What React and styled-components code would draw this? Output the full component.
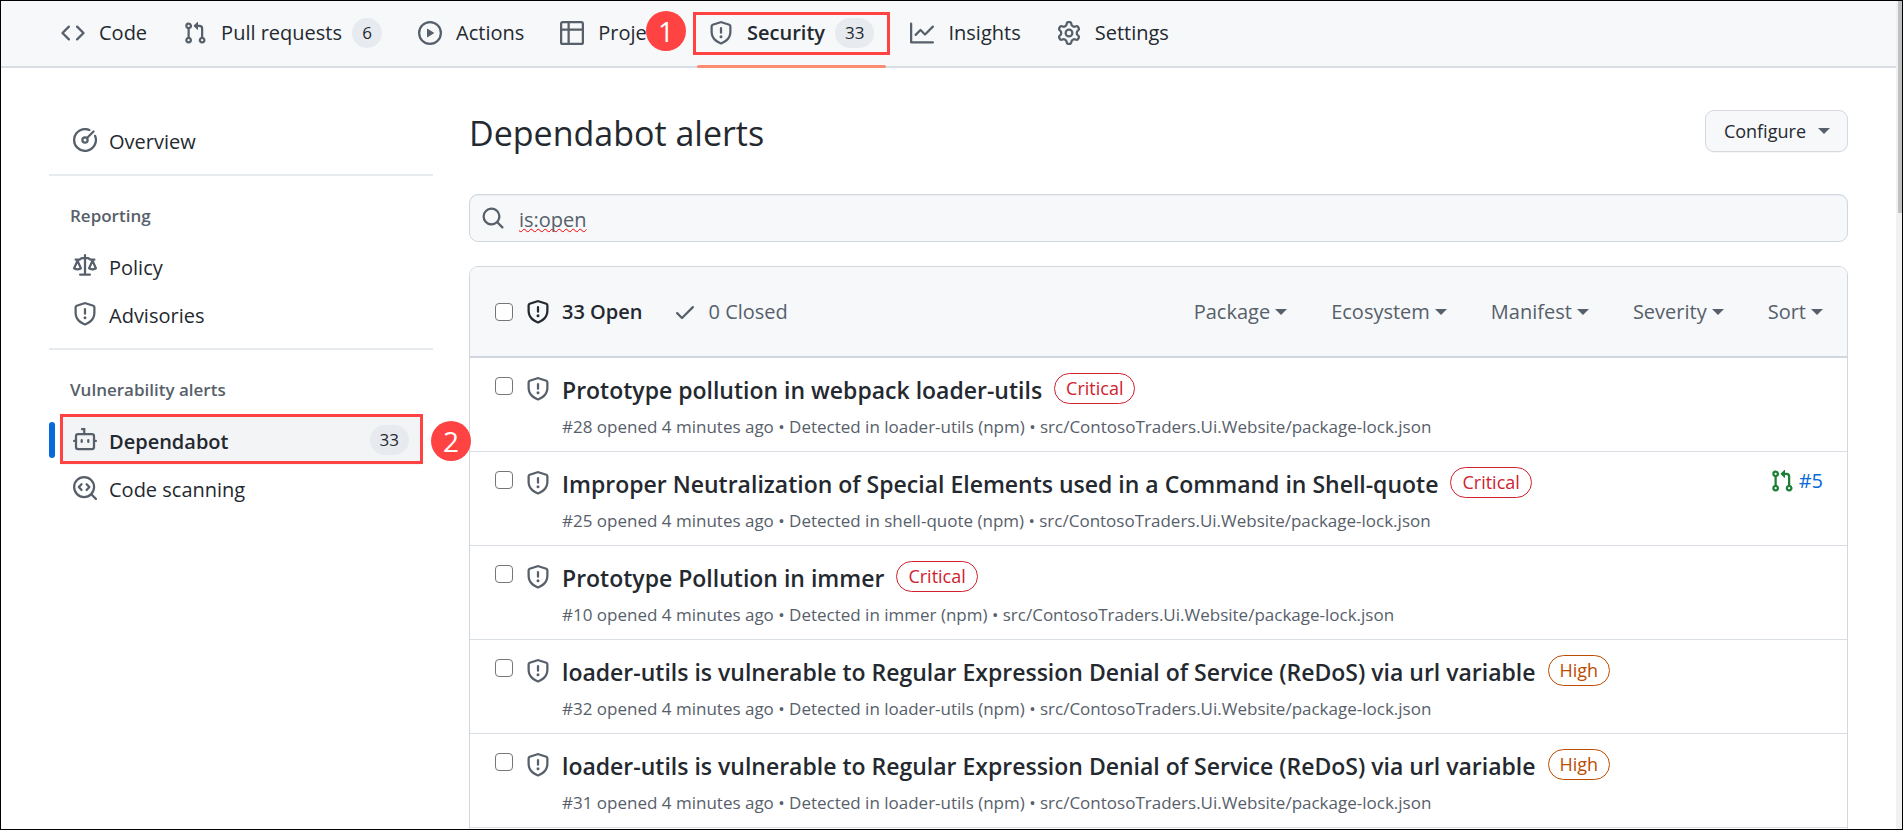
import React from "react";
import styled, { createGlobalStyle, css } from "styled-components";

const color = {
  ink: "#24292f",
  muted: "#57606a",
  line: "#d0d7de",
  rowLine: "#d8dee4",
  canvas: "#f6f8fa",
  link: "#0969da",
  mark: "#ff4343",
};

const GlobalStyle = createGlobalStyle`
  *, *::before, *::after { box-sizing: border-box; }
  body {
    margin: 0;
    background: #fff;
    color: ${color.ink};
    font-family: "Open Sans", "Segoe UI", "Noto Sans", sans-serif;
    font-size: 20px;
    line-height: 30px;
  }
  button, input { font: inherit; color: inherit; }
  a { color: inherit; text-decoration: none; }
  h1, h2, h3, p, ul { margin: 0; padding: 0; }
  ul { list-style: none; }
`;

const paths = {
  code: "m11.28 3.22 4.25 4.25a.75.75 0 0 1 0 1.06l-4.25 4.25a.749.749 0 0 1-1.275-.326.749.749 0 0 1 .215-.734L13.94 8l-3.72-3.72a.749.749 0 0 1 .326-1.275.749.749 0 0 1 .734.215Zm-6.56 0a.751.751 0 0 1 1.042.018.751.751 0 0 1 .018 1.042L2.06 8l3.72 3.72a.749.749 0 0 1-.326 1.275.749.749 0 0 1-.734-.215L.47 8.53a.75.75 0 0 1 0-1.06Z",
  pull: "M1.5 3.25a2.25 2.25 0 1 1 3 2.122v5.256a2.251 2.251 0 1 1-1.5 0V5.372A2.25 2.25 0 0 1 1.5 3.25Zm5.677-.177L9.573.677A.25.25 0 0 1 10 .854V2.5h1A2.5 2.5 0 0 1 13.5 5v5.628a2.251 2.251 0 1 1-1.5 0V5a1 1 0 0 0-1-1h-1v1.646a.25.25 0 0 1-.427.177L7.177 3.427a.25.25 0 0 1 0-.354ZM3.75 2.5a.75.75 0 1 0 0 1.5.75.75 0 0 0 0-1.5Zm0 9.5a.75.75 0 1 0 0 1.5.75.75 0 0 0 0-1.5Zm8.25.75a.75.75 0 1 0 1.5 0 .75.75 0 0 0-1.5 0Z",
  play: "M8 0a8 8 0 1 1 0 16A8 8 0 0 1 8 0ZM1.5 8a6.5 6.5 0 1 0 13 0 6.5 6.5 0 0 0-13 0Zm4.879-2.773 4.264 2.559a.25.25 0 0 1 0 .428l-4.264 2.559A.25.25 0 0 1 6 10.559V5.442a.25.25 0 0 1 .379-.215Z",
  table: "M0 1.75C0 .784.784 0 1.75 0h12.5C15.216 0 16 .784 16 1.75v12.5A1.75 1.75 0 0 1 14.25 16H1.75A1.75 1.75 0 0 1 0 14.25ZM6.5 6.5v8h7.75a.25.25 0 0 0 .25-.25V6.5Zm8-1.5V1.75a.25.25 0 0 0-.25-.25H6.5V5Zm-13 1.5v7.75c0 .138.112.25.25.25H5v-8ZM5 5V1.5H1.75a.25.25 0 0 0-.25.25V5Z",
  graph: "M1.5 1.75V13.5h13.75a.75.75 0 0 1 0 1.5H.75a.75.75 0 0 1-.75-.75V1.75a.75.75 0 0 1 1.5 0Zm14.28 2.53-5.25 5.25a.75.75 0 0 1-1.06 0L7 7.06 4.28 9.78a.751.751 0 0 1-1.042-.018.751.751 0 0 1-.018-1.042l3.25-3.25a.75.75 0 0 1 1.06 0L10 7.94l4.72-4.72a.751.751 0 0 1 1.042.018.751.751 0 0 1 .018 1.042Z",
  gear: "M8 0a8.2 8.2 0 0 1 .701.031C9.444.095 9.99.645 10.16 1.29l.288 1.107c.018.066.079.158.212.224.231.114.454.243.668.386.123.082.233.09.299.071l1.103-.303c.644-.176 1.392.021 1.82.63.27.385.506.792.704 1.218.315.675.111 1.422-.364 1.891l-.814.806c-.049.048-.098.147-.088.294.016.257.016.515 0 .772-.01.147.038.246.088.294l.814.806c.475.469.679 1.216.364 1.891a7.977 7.977 0 0 1-.704 1.217c-.428.61-1.176.807-1.82.63l-1.102-.302c-.067-.019-.177-.011-.3.071a5.909 5.909 0 0 1-.668.386c-.133.066-.194.158-.211.224l-.29 1.106c-.168.646-.715 1.196-1.458 1.26a8.006 8.006 0 0 1-1.402 0c-.743-.064-1.289-.614-1.458-1.26l-.289-1.106c-.018-.066-.079-.158-.212-.224a5.738 5.738 0 0 1-.668-.386c-.123-.082-.233-.09-.299-.071l-1.103.303c-.644.176-1.392-.021-1.82-.63a8.12 8.12 0 0 1-.704-1.218c-.315-.675-.111-1.422.363-1.891l.815-.806c.05-.048.098-.147.088-.294a6.214 6.214 0 0 1 0-.772c.01-.147-.038-.246-.088-.294l-.815-.806C.635 6.045.431 5.298.746 4.623a7.92 7.92 0 0 1 .704-1.217c.428-.61 1.176-.807 1.82-.63l1.102.302c.067.019.177.011.3-.071.214-.143.437-.272.668-.386.133-.066.194-.158.211-.224l.29-1.106C6.009.645 6.556.095 7.299.03 7.53.01 7.764 0 8 0Zm-.571 1.525c-.036.003-.108.036-.137.146l-.289 1.105c-.147.561-.549.967-.998 1.189-.173.086-.34.183-.5.29-.417.278-.97.423-1.529.27l-1.103-.303c-.109-.03-.175.016-.195.045-.22.312-.412.644-.573.99-.014.031-.021.11.059.19l.815.806c.411.406.562.957.53 1.456a4.709 4.709 0 0 0 0 .582c.032.499-.119 1.05-.53 1.456l-.815.806c-.081.08-.073.159-.059.19.162.346.353.677.573.989.02.03.085.076.195.046l1.102-.303c.56-.153 1.113-.008 1.53.27.161.107.328.204.501.29.447.222.85.629.997 1.189l.289 1.105c.029.109.101.143.137.146a6.6 6.6 0 0 0 1.142 0c.036-.003.108-.036.137-.146l.289-1.105c.147-.561.549-.967.998-1.189.173-.086.34-.183.5-.29.417-.278.97-.423 1.529-.27l1.103.303c.109.029.175-.016.195-.045.22-.313.411-.644.573-.99.014-.031.021-.11-.059-.19l-.815-.806c-.411-.406-.562-.957-.53-1.456a4.709 4.709 0 0 0 0-.582c-.032-.499.119-1.05.53-1.456l.815-.806c.081-.08.073-.159.059-.19a6.464 6.464 0 0 0-.573-.989c-.02-.03-.085-.076-.195-.046l-1.102.303c-.56.153-1.113.008-1.53-.27a4.44 4.44 0 0 0-.501-.29c-.447-.222-.85-.629-.997-1.189l-.289-1.105c-.029-.11-.101-.143-.137-.146a6.6 6.6 0 0 0-1.142 0ZM11 8a3 3 0 1 1-6 0 3 3 0 0 1 6 0ZM9.5 8a1.5 1.5 0 1 0-3.001.001A1.5 1.5 0 0 0 9.5 8Z",
  shield: "M7.467.133a1.748 1.748 0 0 1 1.066 0l5.25 1.68A1.75 1.75 0 0 1 15 3.48V7c0 1.566-.32 3.182-1.303 4.682-.983 1.498-2.585 2.813-5.032 3.855a1.697 1.697 0 0 1-1.33 0c-2.447-1.042-4.049-2.357-5.032-3.855C1.32 10.182 1 8.566 1 7V3.48a1.755 1.755 0 0 1 1.217-1.667Zm.61 1.429a.25.25 0 0 0-.153 0l-5.25 1.68a.25.25 0 0 0-.174.238V7c0 1.358.275 2.666 1.057 3.86.784 1.194 2.121 2.34 4.366 3.297a.196.196 0 0 0 .154 0c2.245-.956 3.582-2.104 4.366-3.298C13.225 9.666 13.5 8.36 13.5 7V3.48a.251.251 0 0 0-.174-.237l-5.25-1.68ZM8.75 4.75v3a.75.75 0 0 1-1.5 0v-3a.75.75 0 0 1 1.5 0ZM9 10.5a1 1 0 1 1-2 0 1 1 0 0 1 2 0Z",
  search: "M10.68 11.74a6 6 0 0 1-7.922-8.982 6 6 0 0 1 8.982 7.922l3.04 3.04a.749.749 0 0 1-.326 1.275.749.749 0 0 1-.734-.215ZM11.5 7a4.499 4.499 0 1 0-8.997 0A4.499 4.499 0 0 0 11.5 7Z",
  check: "M13.78 4.22a.75.75 0 0 1 0 1.06l-7.25 7.25a.75.75 0 0 1-1.06 0L2.22 9.28a.751.751 0 0 1 .018-1.042.751.751 0 0 1 1.042-.018L6 10.94l6.72-6.72a.75.75 0 0 1 1.06 0Z",
  law: "M8.75.75V2h.985c.304 0 .603.08.867.231l1.29.736c.038.022.08.033.124.033h2.234a.75.75 0 0 1 0 1.5h-.427l2.111 4.692a.75.75 0 0 1-.154.838l-.53-.53.529.531-.001.002-.002.002-.006.006-.006.005-.01.01-.045.04c-.21.176-.441.327-.686.45C14.556 10.78 13.88 11 13 11a4.498 4.498 0 0 1-2.023-.454 3.544 3.544 0 0 1-.686-.45l-.045-.04-.016-.015-.006-.006-.004-.004v-.001a.75.75 0 0 1-.154-.838L12.178 4.5h-.162c-.305 0-.604-.079-.868-.231l-1.29-.736a.245.245 0 0 0-.124-.033H8.75V13h2.5a.75.75 0 0 1 0 1.5h-6.5a.75.75 0 0 1 0-1.5h2.5V3.5h-.984a.245.245 0 0 0-.124.033l-1.289.737c-.265.15-.564.23-.869.23h-.162l2.112 4.692a.75.75 0 0 1-.154.838l-.53-.53.529.531-.001.002-.002.002-.006.006-.016.015-.045.04c-.21.176-.441.327-.686.45C4.556 10.78 3.88 11 3 11a4.498 4.498 0 0 1-2.023-.454 3.544 3.544 0 0 1-.686-.45l-.045-.04-.016-.015-.006-.006-.004-.004v-.001a.75.75 0 0 1-.154-.838L2.178 4.5H1.75a.75.75 0 0 1 0-1.5h2.234a.249.249 0 0 0 .125-.033l1.288-.737c.265-.15.564-.23.869-.23h.984V.75a.75.75 0 0 1 1.5 0Zm2.945 8.477c.285.135.718.273 1.305.273s1.02-.138 1.305-.273L13 6.327Zm-10 0c.285.135.718.273 1.305.273s1.02-.138 1.305-.273L3 6.327Z",
};

const outlines = {
  meter: (
    <>
      <path d="M10.9 1.35A7.25 7.25 0 1 0 14.7 5.2" />
      <circle cx="8" cy="8" r="1.75" />
      <path d="M9.3 6.7 13.7 2.3" />
    </>
  ),
  dependabot: (
    <>
      <path d="M6 .75h1.5V4" />
      <rect x="2" y="4" width="12" height="10" rx="1.4" />
      <path d="M2 8.6H.75M14 8.6h1.25M5.8 8.1v1.2M10.2 8.1v1.2" />
    </>
  ),
  codescan: (
    <>
      <circle cx="7.4" cy="7.4" r="6.65" />
      <path d="M12.2 12.2 15.25 15.25" />
      <path d="M5.7 5.5 3.9 7.4l1.8 1.9M9.1 5.5l1.8 1.9-1.8 1.9" strokeLinejoin="round" />
    </>
  ),
};

const Svg = styled.svg`
  width: 24px;
  height: 24px;
  flex: none;
  color: ${(p) => p.$tone || color.muted};
`;

function Icon({ name, tone }) {
  return (
    <Svg viewBox="0 0 16 16" aria-hidden="true" $tone={tone}>
      {paths[name] ? (
        <path d={paths[name]} fill="currentColor" fillRule="evenodd" />
      ) : (
        <g fill="none" stroke="currentColor" strokeWidth="1.5" strokeLinecap="round">
          {outlines[name]}
        </g>
      )}
    </Svg>
  );
}

const Shell = styled.div`
  display: grid;
  grid-template-columns: minmax(0, 1fr) 6px;
  height: 100vh;
  overflow: hidden;
  border: 1px solid #000;
`;

const Page = styled.div`
  min-width: 0;
`;

const ScrollTrack = styled.div`
  padding-left: 2px;
  background: #f1f1f1;
`;

const ScrollThumb = styled.div`
  height: 212px;
  background: #c1c1c1;
`;

const TopNav = styled.nav`
  display: flex;
  gap: 12px;
  height: 67px;
  padding: 0 48px;
  background: ${color.canvas};
  border-bottom: 2px solid ${color.rowLine};
`;

const Tab = styled.a`
  position: relative;
  display: flex;
  align-items: center;
  gap: 10px;
  padding: 0 12px 2px;
  white-space: nowrap;
  font-weight: ${(p) => (p.$active ? 600 : 400)};
  ${(p) =>
    p.$active &&
    css`
      &::after {
        content: "";
        position: absolute;
        left: 0;
        right: 0;
        bottom: -2px;
        height: 3px;
        border-radius: 2px;
        background: #fd8c73;
      }
    `}
`;

const TabLabel = styled.span`
  padding-left: 4px;
`;

const Counter = styled.span`
  min-width: 30px;
  padding: 0 10px;
  border-radius: 15px;
  background: #e7eaef;
  font-size: 17px;
  font-weight: 500;
  line-height: 30px;
  text-align: center;
`;

const TabFrame = styled.span`
  position: absolute;
  inset: 11px -4px 11px;
  border: 3px solid ${color.mark};
`;

const Marker = styled.span`
  position: absolute;
  display: grid;
  place-items: center;
  width: 40px;
  height: 40px;
  border-radius: 50%;
  background: ${color.mark};
  color: #fff;
  font-size: 28px;
  font-weight: 400;
  z-index: 1;
`;

const TabMarker = styled(Marker)`
  top: 10px;
  left: -51px;
`;

const Body = styled.div`
  display: grid;
  grid-template-columns: 384px minmax(0, 1fr);
  gap: 36px;
  padding: 42px 48px 0;
`;

const Side = styled.nav`
  padding-top: 7px;
`;

const SideGroup = styled.section`
  & + & {
    margin-top: 9px;
    padding-top: 24px;
    border-top: 2px solid #e8ebee;
  }
`;

const SideTitle = styled.h2`
  padding: 0 21px;
  margin-bottom: 11px;
  color: ${color.muted};
  font-size: 17px;
  font-weight: 600;
  line-height: 32px;
`;

const SideItem = styled.a`
  position: relative;
  display: flex;
  align-items: center;
  gap: 12px;
  height: 48px;
  margin: 0 12px;
  padding: 0 12px 2px;
  font-weight: ${(p) => (p.$active ? 600 : 400)};
  background: ${(p) => (p.$active ? "#f3f4f6" : "transparent")};
  ${(p) =>
    p.$active &&
    css`
      &::before {
        content: "";
        position: absolute;
        top: 5px;
        left: -12px;
        width: 6px;
        height: 36px;
        border-radius: 6px;
        background: ${color.link};
      }
    `}
`;

const SideLabel = styled.span`
  flex: 1;
  padding-top: 3px;
`;

const SideFrame = styled.span`
  position: absolute;
  inset: -3px -2px 1px -1px;
  border: 3px solid ${color.mark};
`;

const SideMarker = styled(Marker)`
  top: 4px;
  right: -50px;
`;

const Heading = styled.header`
  display: flex;
  align-items: center;
  justify-content: space-between;
  height: 42px;
  margin-bottom: 42px;
`;

const Title = styled.h1`
  padding-top: 4px;
  font-size: 34px;
  font-weight: 400;
  line-height: 48px;
`;

const Configure = styled.button`
  display: flex;
  align-items: center;
  gap: 12px;
  height: 42px;
  padding: 0 17px 0 18px;
  border: 1px solid #d5d9dd;
  border-radius: 9px;
  background: ${color.canvas};
  box-shadow: 0 1px 0 rgba(31, 35, 40, 0.04);
  font-size: 18px;
  font-weight: 500;
`;

const Caret = styled.span`
  border: 6px solid transparent;
  border-top-color: ${color.muted};
  border-bottom: 0;
`;

const SearchBox = styled.label`
  display: flex;
  align-items: center;
  gap: 14px;
  height: 48px;
  margin-bottom: 24px;
  padding: 0 11px;
  border: 1px solid ${color.line};
  border-radius: 9px;
  background: ${color.canvas};
  box-shadow: inset 0 1px 0 rgba(208, 215, 222, 0.3);
`;

const SearchInput = styled.input`
  flex: 1;
  min-width: 0;
  padding: 3px 0 0;
  border: 0;
  outline: 0;
  background: transparent;
  color: ${color.muted};
  text-decoration: underline wavy #f00 1px;
  text-decoration-skip-ink: none;
`;

const Panel = styled.section`
  padding-bottom: 24px;
  border: 1px solid ${color.line};
  border-radius: 9px;
`;

const PanelHead = styled.header`
  display: flex;
  align-items: center;
  height: 91px;
  padding: 1px 24px 0;
  border-bottom: 2px solid ${color.line};
  border-radius: 8px 8px 0 0;
  background: ${color.canvas};
`;

const Check = styled.input`
  appearance: none;
  flex: none;
  width: 18px;
  height: 18px;
  margin: 0 13px 0 1px;
  border: 1px solid #767676;
  border-radius: 4px;
  background: #fff;
`;

const StateLink = styled.a`
  display: flex;
  align-items: center;
  gap: 12px;
  margin-right: 30px;
  color: ${(p) => (p.$active ? color.ink : color.muted)};
  font-weight: ${(p) => (p.$active ? 600 : 400)};
`;

const Filters = styled.div`
  display: flex;
  gap: 44px;
  margin-left: auto;
`;

const Filter = styled.button`
  display: flex;
  align-items: center;
  gap: 5px;
  padding: 0;
  border: 0;
  background: transparent;
  color: ${color.muted};
`;

const Alert = styled.li`
  display: flex;
  align-items: flex-start;
  height: 94px;
  padding: 15px 24px 0;
  border-bottom: 1px solid ${color.rowLine};
`;

const Lead = styled.div`
  display: flex;
  align-items: flex-start;
  padding-top: 4px;
`;

const AlertBody = styled.div`
  flex: 1;
  min-width: 0;
  margin-left: 12px;
`;

const AlertLine = styled.div`
  display: flex;
  align-items: flex-start;
  gap: 12px;
`;

const AlertTitle = styled.h3`
  font-size: 23px;
  font-weight: 560;
  line-height: 35px;
  white-space: nowrap;
`;

const Severity = styled.span`
  height: 31px;
  padding: 0 11px;
  border: 1px solid currentColor;
  border-radius: 16px;
  color: ${(p) => (p.$level === "Critical" ? "#cf222e" : "#bc4c00")};
  font-size: 18px;
  font-weight: 500;
  line-height: 29px;
`;

const Meta = styled.p`
  margin-top: 3px;
  color: ${color.muted};
  font-size: 17px;
  line-height: 32px;
  white-space: nowrap;
`;

const PullLink = styled.a`
  display: flex;
  align-items: center;
  gap: 5px;
  color: ${color.link};
  line-height: 28px;
`;

const tabs = [
  { icon: "code", label: "Code" },
  { icon: "pull", label: "Pull requests", count: 6 },
  { icon: "play", label: "Actions" },
  { icon: "table", label: "Projects" },
  { icon: "shield", label: "Security", count: 33, active: true },
  { icon: "graph", label: "Insights" },
  { icon: "gear", label: "Settings" },
];

const groups = [
  { items: [{ icon: "meter", label: "Overview" }] },
  {
    title: "Reporting",
    items: [
      { icon: "law", label: "Policy" },
      { icon: "shield", label: "Advisories" },
    ],
  },
  {
    title: "Vulnerability alerts",
    items: [
      { icon: "dependabot", label: "Dependabot", count: 33, active: true },
      { icon: "codescan", label: "Code scanning" },
    ],
  },
];

const filters = ["Package", "Ecosystem", "Manifest", "Severity", "Sort"];

const alerts = [
  { id: 28, title: "Prototype pollution in webpack loader-utils", level: "Critical", pkg: "loader-utils" },
  { id: 25, title: "Improper Neutralization of Special Elements used in a Command in Shell-quote", level: "Critical", pkg: "shell-quote", pull: 5 },
  { id: 10, title: "Prototype Pollution in immer", level: "Critical", pkg: "immer" },
  { id: 32, title: "loader-utils is vulnerable to Regular Expression Denial of Service (ReDoS) via url variable", level: "High", pkg: "loader-utils" },
  { id: 31, title: "loader-utils is vulnerable to Regular Expression Denial of Service (ReDoS) via url variable", level: "High", pkg: "loader-utils" },
];

function AlertRow({ alert }) {
  return (
    <Alert>
      <Lead>
        <Check type="checkbox" aria-label={`Select alert ${alert.id}`} />
        <Icon name="shield" />
      </Lead>
      <AlertBody>
        <AlertLine>
          <AlertTitle>
            <a href="#alert">{alert.title}</a>
          </AlertTitle>
          <Severity $level={alert.level}>{alert.level}</Severity>
        </AlertLine>
        <Meta>
          {`#${alert.id} opened 4 minutes ago • Detected in ${alert.pkg} (npm) • src/ContosoTraders.Ui.Website/package-lock.json`}
        </Meta>
      </AlertBody>
      {alert.pull && (
        <PullLink href="#pull">
          <Icon name="pull" tone="#1a7f37" />#{alert.pull}
        </PullLink>
      )}
    </Alert>
  );
}

export default function App() {
  return (
    <Shell>
      <GlobalStyle />
      <Page>
        <TopNav aria-label="Repository">
          {tabs.map((t) => (
            <Tab key={t.label} href="#tab" $active={t.active}>
              <Icon name={t.icon} />
              <TabLabel>{t.label}</TabLabel>
              {t.count && <Counter>{t.count}</Counter>}
              {t.active && (
                <>
                  <TabFrame />
                  <TabMarker>1</TabMarker>
                </>
              )}
            </Tab>
          ))}
        </TopNav>
        <Body>
          <Side aria-label="Security">
            {groups.map((g) => (
              <SideGroup key={g.title || "overview"}>
                {g.title && <SideTitle>{g.title}</SideTitle>}
                {g.items.map((i) => (
                  <SideItem key={i.label} href="#section" $active={i.active}>
                    <Icon name={i.icon} />
                    <SideLabel>{i.label}</SideLabel>
                    {i.count && <Counter>{i.count}</Counter>}
                    {i.active && (
                      <>
                        <SideFrame />
                        <SideMarker>2</SideMarker>
                      </>
                    )}
                  </SideItem>
                ))}
              </SideGroup>
            ))}
          </Side>
          <main>
            <Heading>
              <Title>Dependabot alerts</Title>
              <Configure type="button">
                Configure
                <Caret />
              </Configure>
            </Heading>
            <SearchBox>
              <Icon name="search" />
              <SearchInput type="text" aria-label="Search alerts" defaultValue="is:open" />
            </SearchBox>
            <Panel>
              <PanelHead>
                <Check type="checkbox" aria-label="Select all alerts" />
                <StateLink href="#open" $active>
                  <Icon name="shield" tone={color.ink} />
                  33 Open
                </StateLink>
                <StateLink href="#closed">
                  <Icon name="check" />
                  0 Closed
                </StateLink>
                <Filters>
                  {filters.map((f) => (
                    <Filter key={f} type="button">
                      {f}
                      <Caret />
                    </Filter>
                  ))}
                </Filters>
              </PanelHead>
              <ul>
                {alerts.map((a) => (
                  <AlertRow key={a.id} alert={a} />
                ))}
              </ul>
            </Panel>
          </main>
        </Body>
      </Page>
      <ScrollTrack>
        <ScrollThumb />
      </ScrollTrack>
    </Shell>
  );
}
